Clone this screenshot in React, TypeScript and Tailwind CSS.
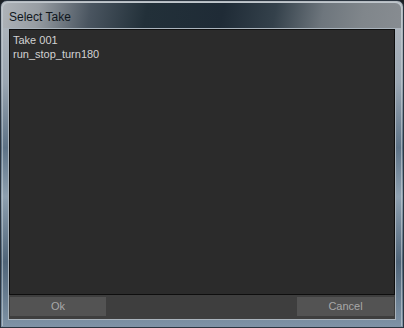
const takes = ["Take 001", "run_stop_turn180"];

export default function App() {
  return (
    <div className="w-[404px] h-[328px] bg-[#1b1f24]" style={{ fontFamily: '"Liberation Sans", Arial, sans-serif' }}>
      <div className="flex h-full w-full flex-col rounded-t-[7px] border border-[#2b3540] bg-[linear-gradient(to_bottom,#b4bac0_0%,#9aa6b2_25%,#5d7286_45%,#8ea0b0_60%,#4f6478_80%,#7f93a6_100%)] p-px">
        <div className="flex h-full flex-col rounded-t-[6px] border-t border-l border-r border-[#c9d0d6]/60">
          {/* title bar */}
          <div className="flex h-[25px] shrink-0 items-center rounded-t-[6px] bg-[linear-gradient(100deg,#aeb3b8_0%,#979da3_9%,#4a5560_22%,#223039_36%,#1f2b36_55%,#34414b_68%,#6e767d_80%,#80868b_90%,#878c91_100%)] pl-[6px] pt-[2px]">
            <span className="text-[12px] text-[#10161c]">Select Take</span>
          </div>
          <div className="flex flex-1 flex-col px-[5px] pb-[6px]">
            <div className="flex flex-1 flex-col border border-[#aab4bd] bg-[#3e3e3e]">
              <div className="flex-1 border border-[#0e0e0e] bg-[#2b2b2b] px-[3px] pt-[3px]">
                {takes.map((t) => (
                  <div key={t} className="h-[14px] text-[11px] leading-[14px] text-[#d2d2d2]">
                    {t}
                  </div>
                ))}
              </div>
              <div className="flex h-[24px] shrink-0 items-center justify-between px-px pb-px">
                <button className="h-[19px] w-[96px] bg-[#535353] text-[11px] text-[#a8a8a8]">Ok</button>
                <button className="h-[19px] w-[97px] bg-[#535353] text-[11px] text-[#a8a8a8]">Cancel</button>
              </div>
            </div>
          </div>
        </div>
      </div>
    </div>
  );
}
